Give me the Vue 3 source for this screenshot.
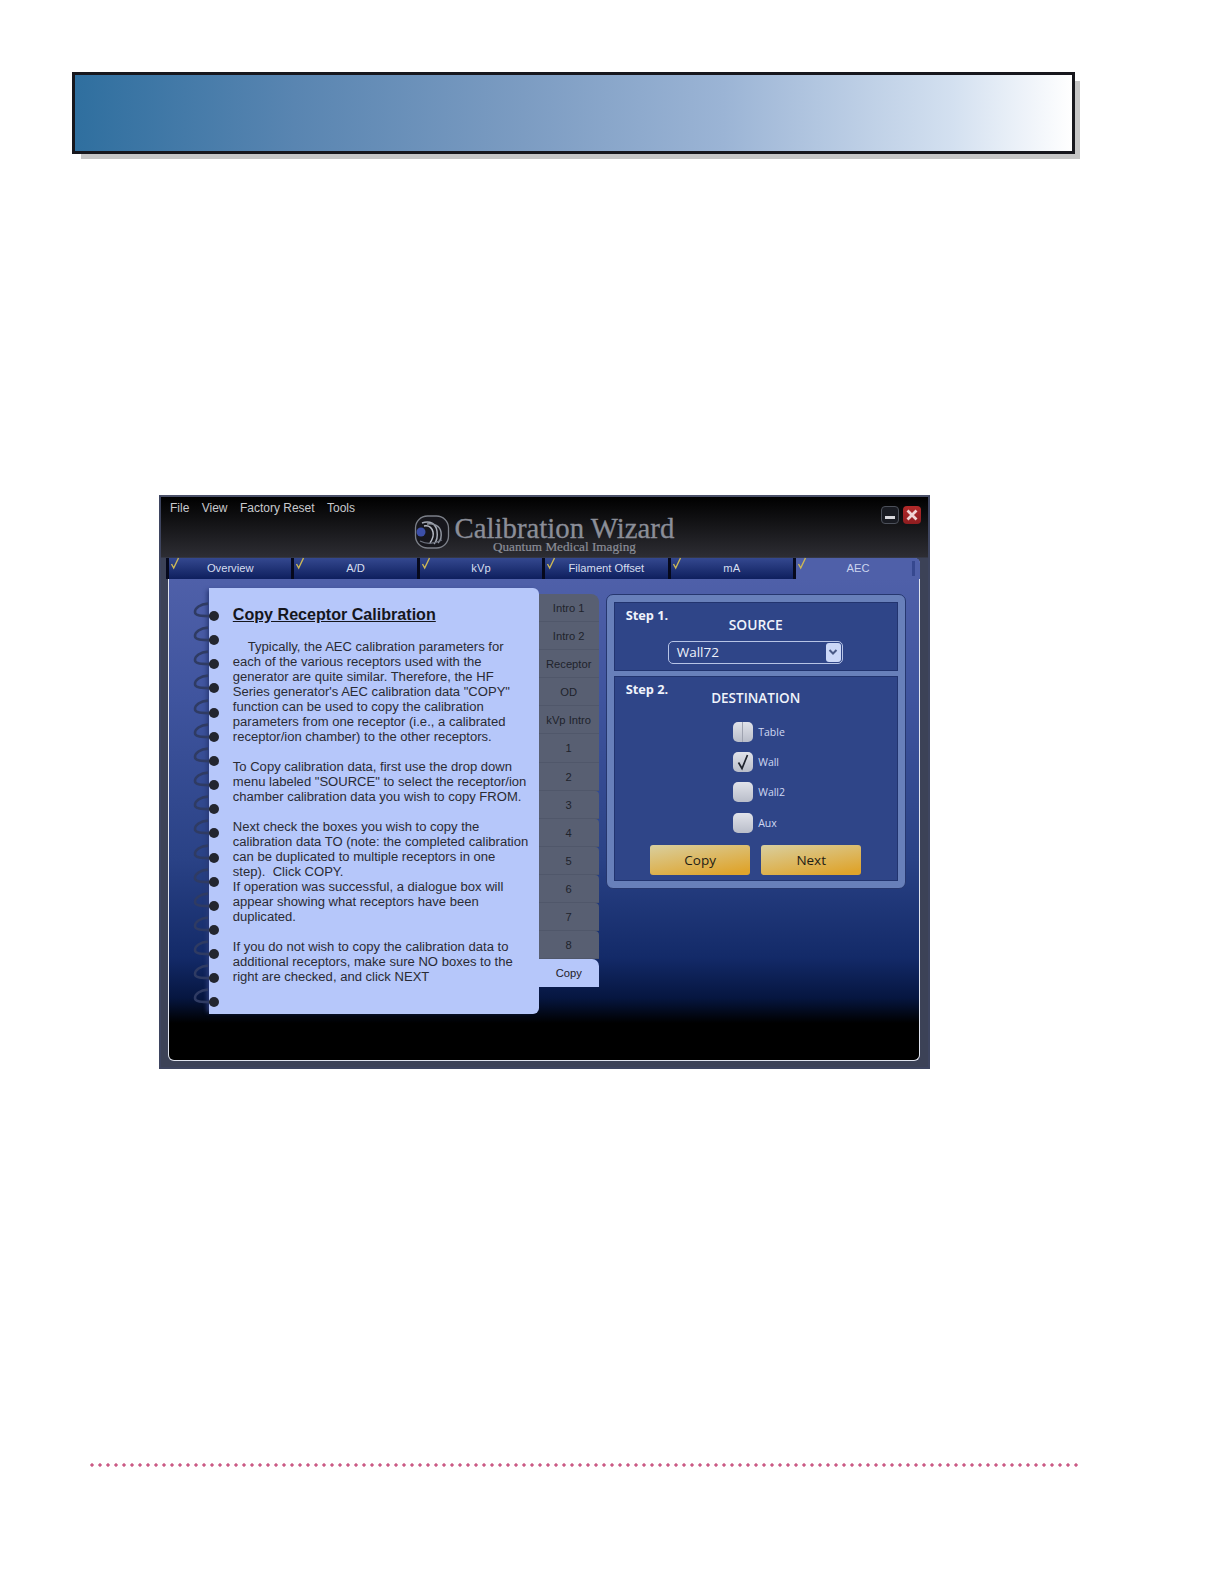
<script setup>
const menus = ['File', 'View', 'Factory Reset', 'Tools']
const tabs = ['Overview', 'A/D', 'kVp', 'Filament Offset', 'mA', 'AEC']
const sideTabs = ['Intro 1', 'Intro 2', 'Receptor', 'OD', 'kVp Intro', '1', '2', '3', '4', '5', '6', '7', '8', 'Copy']
const rings = Array.from({ length: 17 }, (_, i) => i)
const boxes = [
  { name: 'Table', checked: false },
  { name: 'Wall', checked: true },
  { name: 'Wall2', checked: false },
  { name: 'Aux', checked: false },
]
const paragraphs = [
  { indent: true, lines: ['Typically, the AEC calibration parameters for', 'each of the various receptors used with the', 'generator are quite similar. Therefore, the HF', 'Series generator\'s AEC calibration data "COPY"', 'function can be used to copy the calibration', 'parameters from one receptor (i.e., a calibrated', 'receptor/ion chamber) to the other receptors.'] },
  { lines: ['To Copy calibration data, first use the drop down', 'menu labeled "SOURCE" to select the receptor/ion', 'chamber calibration data you wish to copy FROM.'] },
  { lines: ['Next check the boxes you wish to copy the', 'calibration data TO (note: the completed calibration', 'can be duplicated to multiple receptors in one', 'step).  Click COPY.', 'If operation was successful, a dialogue box will', 'appear showing what receptors have been', 'duplicated.'] },
  { lines: ['If you do not wish to copy the calibration data to', 'additional receptors, make sure NO boxes to the', 'right are checked, and click NEXT'] },
]
</script>

<template>
  <div class="page">
    <div class="banner"></div>

    <div class="window">
      <header class="titlebar">
        <nav class="menu">
          <span v-for="m in menus" :key="m">{{ m }}</span>
        </nav>
        <div class="brand">
          <svg class="logo" width="36" height="36" viewBox="0 0 36 36">
            <rect x="1.5" y="2" width="33" height="32" rx="12" fill="#17171d" stroke="#7b7f88" stroke-width="1.3" />
            <circle cx="7" cy="18" r="4.5" fill="#3c4fa8" />
            <path d="M8 9c8-3 14 1 15 8s-1 11-3 13" fill="none" stroke="#a6abb6" stroke-width="1.5" />
            <path d="M13 10c7-1 13 2 14 8s-1 9-3 11" fill="none" stroke="#8e939e" stroke-width="1.5" />
            <path d="M10 12c6-1 8 2 9 6s-1 8-3 11" fill="none" stroke="#b8bcc6" stroke-width="1.5" />
            <path d="M6 27c6 3 14 3 22-1" fill="none" stroke="#6f7480" stroke-width="1.2" />
          </svg>
          <div class="brand-text">
            <div class="brand-name">Calibration Wizard</div>
            <div class="brand-sub">Quantum Medical Imaging</div>
          </div>
        </div>
        <div class="winbtns">
          <span class="btn-min"><i></i></span>
          <span class="btn-close">
            <svg width="12" height="12" viewBox="0 0 12 12"><path d="M1.5 1.5l9 9M10.5 1.5l-9 9" stroke="#f0d4d4" stroke-width="2.8" /></svg>
          </span>
        </div>
      </header>

      <div class="frame">
        <div class="tabs">
          <div v-for="(t, i) in tabs" :key="t" class="tab" :class="{ active: i === 5 }">
            <svg class="tick" width="10" height="13" viewBox="0 0 10 13"><path d="M1.5 7l2.2 4L8.5 1" fill="none" stroke="#cdb755" stroke-width="1.4" /></svg>
            {{ t }}
          </div>
        </div>

        <div class="content">
          <div class="notebook-wrap">
            <div class="spine">
              <svg v-for="r in rings" :key="r" class="ring" width="28" height="24" viewBox="0 0 28 24">
                <path d="M16 1.5C8 2 3 6 3 10c0 4 6 4 17 4" fill="none" stroke="#2f3b63" stroke-width="2.6" />
                <circle cx="22" cy="14" r="5" fill="#23262f" />
              </svg>
            </div>
            <article class="notebook">
              <h1>Copy Receptor Calibration</h1>
              <p v-for="(p, i) in paragraphs" :key="i" :class="{ indent: p.indent }">
                <span v-for="l in p.lines" :key="l" class="line">{{ l }}</span>
              </p>
            </article>
          </div>

          <div class="sidetabs">
            <div v-for="s in sideTabs" :key="s" class="sidetab" :class="{ current: s === 'Copy' }">{{ s }}</div>
          </div>

          <section class="panel">
            <div class="step step1">
              <div class="step-label">Step 1.</div>
              <div class="step-title">SOURCE</div>
              <div class="select">
                <span>Wall72</span>
                <span class="arrow">
                  <svg width="10" height="8" viewBox="0 0 10 8"><path d="M1.5 2l3.5 3.5L8.5 2" fill="none" stroke="#4a5a86" stroke-width="2" /></svg>
                </span>
              </div>
            </div>
            <div class="step step2">
              <div class="step-label">Step 2.</div>
              <div class="step-title dest">DESTINATION</div>
              <div class="checks">
                <label v-for="b in boxes" :key="b.name" class="check">
                  <span class="box" :class="{ split: b.name === 'Table' }">
                    <svg v-if="b.checked" width="16" height="18" viewBox="0 0 16 18"><path d="M3.5 9.5l3.5 6L12.5 2" fill="none" stroke="#20242e" stroke-width="1.7" /></svg>
                  </span>
                  <span>{{ b.name }}</span>
                </label>
              </div>
              <div class="actions">
                <span class="action">Copy</span>
                <span class="action">Next</span>
              </div>
            </div>
          </section>
        </div>
      </div>
    </div>

    <div class="dots"></div>
  </div>
</template>

<style>
html, body { margin: 0; background: #fff; }
</style>

<style scoped>
.page {
  box-sizing: border-box;
  width: 1222px;
  height: 1584px;
  padding: 72px 0 0 72px;
  font-family: "Liberation Sans", Arial, sans-serif;
  background: #fff;
  overflow: hidden;
}
.banner {
  box-sizing: border-box;
  width: 1003px;
  height: 82px;
  border: 3px solid #17171d;
  background: linear-gradient(90deg, #2f6f9f 0%, #5985b1 22%, #7c9cc2 45%, #9bb4d5 65%, #d3e0f0 88%, #ffffff 100%);
  box-shadow: 7px 7px 0 -2px #c6c6c6;
}
.window {
  box-sizing: border-box;
  width: 771px;
  height: 574px;
  margin: 341px 0 0 87px;
  padding: 2px 8px 6px 7px;
  background: linear-gradient(180deg, #000 0, #2d2d33 60px, #3c4257 61px, #3c4257 100%);
  border: 2px solid #3e4560;
  border-top-color: #4a5068;
  display: flex;
  flex-direction: column;
}
.titlebar {
  position: relative;
  height: 58.6px;
  flex: none;
}
.menu {
  display: flex;
  gap: 12.4px;
  padding: 1.5px 0 0 2px;
  font-size: 12px;
  line-height: 15px;
  color: #c8c9cd;
}
.brand {
  position: absolute;
  left: 246px;
  top: 14px;
  display: flex;
  gap: 4.5px;
}
.logo { margin-top: 1px; }
.brand-name {
  font-family: "Liberation Serif", "DejaVu Serif", serif;
  font-size: 28.8px;
  line-height: 30px;
  color: #8b8e98;
  -webkit-text-stroke: 0.3px #8b8e98;
  white-space: nowrap;
}
.brand-sub {
  margin: -3.5px 0 0 38.5px;
  font-family: "Liberation Serif", "DejaVu Serif", serif;
  font-size: 13.2px;
  line-height: 14px;
  color: #8b8e98;
  -webkit-text-stroke: 0.2px #8b8e98;
  white-space: nowrap;
}
.winbtns {
  position: absolute;
  right: -1px;
  top: 7px;
  display: flex;
  gap: 4px;
}
.btn-min, .btn-close {
  box-sizing: border-box;
  width: 18px;
  height: 18px;
  border-radius: 4px;
  display: flex;
  align-items: center;
  justify-content: center;
}
.btn-min { background: #191b22; border: 1px solid #4c505a; }
.btn-min i { display: block; width: 10px; height: 3px; margin-top: 4px; background: #d8d8dc; }
.btn-close { background: linear-gradient(180deg, #b32a2a, #8e1d20); }
.frame {
  flex: 1;
  min-height: 0;
  display: flex;
  flex-direction: column;
  border-radius: 6px;
  border: 1px solid #e0e4ee;
  border-top: 0;
  background: linear-gradient(180deg, #4f60a9 0, #4f60a9 20px, #3f549e 142px, #2a4286 300px, #132a68 400px, #061640 440px, #000 465px);
}
.tabs {
  display: grid;
  grid-template-columns: repeat(5, 125.4px) 1fr;
  height: 20.4px;
  margin-left: -3px;
  margin-right: -1px;
  flex: none;
}
.tab {
  position: relative;
  box-sizing: border-box;
  border-left: 3px solid #06091c;
  background: linear-gradient(180deg, #34488f, #0e1f5e);
  color: #d6deef;
  font-size: 11.2px;
  line-height: 21px;
  text-align: center;
}
.tab.active {
  background: #4f60a9;
  color: #cbd5ee;
  border-top-right-radius: 5px;
}
.tab.active::after {
  content: "";
  position: absolute;
  right: 5px;
  top: 3px;
  width: 3px;
  height: 15px;
  background: #36488f;
}
.tick { position: absolute; left: 1px; top: -1px; }
.content {
  flex: 1;
  display: flex;
  align-items: flex-start;
  padding: 10px 0 0 23.3px;
}
.notebook-wrap {
  display: flex;
  height: 426px;
}
.spine {
  width: 28px;
  margin-right: -11px;
  padding-top: 14px;
  position: relative;
  z-index: 1;
  display: flex;
  flex-direction: column;
}
.ring { display: block; flex: none; height: 24.17px; }
.notebook {
  box-sizing: border-box;
  width: 329.4px;
  height: 426px;
  padding: 16px 8px 0 23.5px;
  background: #b6c7fa;
  border-radius: 0 6px 6px 0;
  box-shadow: -4px 0 4px -2px #2a3a78;
  color: #2a2b34;
  font-size: 13.06px;
  line-height: 15px;
}
.notebook h1 {
  margin: 0 0 15px;
  font-size: 16.1px;
  line-height: 20px;
  font-weight: 700;
  text-decoration: underline;
  color: #15161d;
}
.notebook p { margin: 0 0 14.9px; }
.line { display: block; white-space: pre; }
.indent .line:first-child { padding-left: 15px; }
.sidetabs {
  width: 60px;
  padding-top: 6px;
  flex: none;
}
.sidetab {
  height: 28.1px;
  box-sizing: border-box;
  background: #585f72;
  color: #20232c;
  font-size: 11.2px;
  line-height: 29px;
  text-align: center;
  border-bottom: 1px solid #50576a;
}
.sidetab:first-child { border-top-right-radius: 8px; }
.sidetab:nth-child(n+8) { border-top-right-radius: 4px; }
.sidetab.current {
  background: #b6c7fa;
  border: 0;
  border-top-right-radius: 7px;
  color: #1e2028;
}
.panel {
  box-sizing: border-box;
  width: 300px;
  height: 295px;
  margin: 6px 0 0 7px;
  padding: 7px;
  background: #6880ba;
  border: 1px solid #26376f;
  border-radius: 7px;
  display: flex;
  flex-direction: column;
  gap: 5px;
  flex: none;
}
.step {
  position: relative;
  background: #2f4588;
  border: 1px solid #22346f;
  color: #f0f3fb;
}
.step1 { height: 67px; flex: none; }
.step2 { flex: 1; }
.step-label {
  position: absolute;
  left: 11px;
  top: 4px;
  font-family: "Open Sans", "Noto Sans", sans-serif;
  font-size: 12.8px;
  line-height: 17px;
  font-weight: 700;
}
.step-title {
  padding-top: 13px;
  text-align: center;
  font-family: "Open Sans", "Noto Sans", sans-serif;
  font-size: 13.8px;
  font-weight: 600;
  line-height: 18px;
}
.step-title.dest { padding-top: 12px; font-size: 13.5px; }
.select {
  box-sizing: border-box;
  width: 175px;
  height: 23px;
  margin: 7px 0 0 53px;
  padding: 0 1px 0 8px;
  border: 1px solid #b7c4e6;
  border-radius: 5px;
  display: flex;
  align-items: center;
  justify-content: space-between;
  font-family: "Open Sans", "Noto Sans", sans-serif;
  font-size: 13.5px;
  color: #eef1fa;
}
.arrow {
  width: 15px;
  height: 19px;
  border-radius: 3px;
  background: #ccd8f8;
  display: flex;
  align-items: center;
  justify-content: center;
}
.checks {
  display: flex;
  flex-direction: column;
  gap: 10.2px;
  padding: 15px 0 0 118px;
}
.check {
  display: flex;
  align-items: center;
  gap: 5.5px;
  height: 20px;
  font-family: "Open Sans", "Noto Sans", sans-serif;
  font-size: 10.5px;
  color: #cfd8f2;
}
.box {
  position: relative;
  box-sizing: border-box;
  width: 20px;
  height: 20px;
  border-radius: 5px;
  background: linear-gradient(180deg, #e1e3ea, #b9bdc9);
  display: flex;
  align-items: center;
  justify-content: center;
}
.box.split::after {
  content: "";
  position: absolute;
  left: 9.5px;
  top: 0;
  width: 1px;
  height: 20px;
  background: #9fa3b0;
}
.actions {
  display: flex;
  gap: 11px;
  padding: 12px 0 0 35.5px;
}
.action {
  width: 100px;
  height: 30px;
  border-radius: 3px;
  background: linear-gradient(170deg, #d9cf9f, #dfa42c 90%);
  color: #1f1c14;
  font-family: "Open Sans", "Noto Sans", sans-serif;
  font-size: 13.5px;
  line-height: 30px;
  text-align: center;
}
.dots {
  width: 988px;
  height: 4px;
  margin: 394px 0 0 18px;
  background: radial-gradient(circle at 2px 2px, #cb5a85 1.4px, transparent 1.9px) 0 0 / 8px 4px repeat-x;
}
</style>
